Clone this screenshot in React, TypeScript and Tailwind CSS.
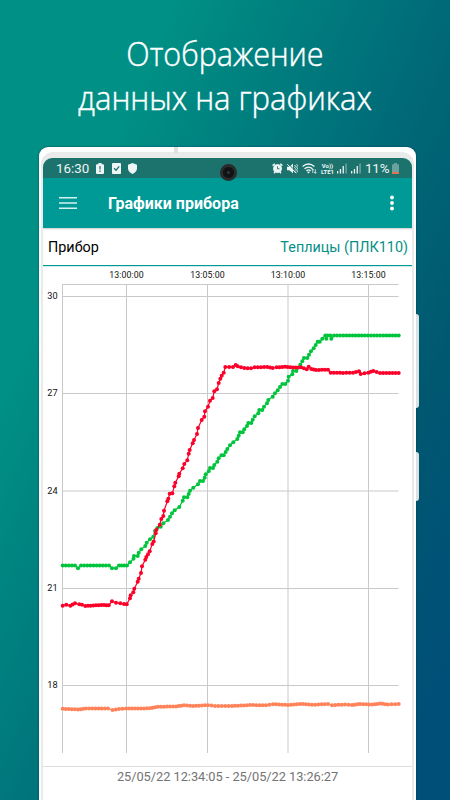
type Point = [number, number];

// chart-space coordinates, origin is the top left corner of the screen area
const GREEN: Point[] = [
  [62.7, 565.5], [75, 565.5], [78, 568.3], [81, 565.5], [109, 565.5], [112, 568.2], [116, 568.2], [119, 565.5],
  [127, 565.5], [130, 562.3], [133.5, 558.7], [134, 556], [137.7, 556], [138.7, 552.7], [141.3, 549.3],
  [145.3, 546], [146.7, 542.7], [150, 539.3], [153.3, 536.7], [155, 531], [157.3, 528], [160.7, 526.7],
  [163.3, 523.3], [168, 520], [170, 516.7], [172, 513.3], [174.7, 510.3], [179.3, 507], [182.7, 500.7],
  [184, 497.3], [187.3, 497.3], [188.7, 494], [190, 490.7], [193.3, 487.7], [198, 484.3], [200, 481],
  [203, 481], [204.7, 477.7], [205.7, 474.3], [208.7, 471.3], [210, 468], [213, 468], [214.3, 465],
  [217.3, 461.7], [218.7, 458.3], [221.5, 455.3], [223.7, 455.3], [225.7, 452], [227.3, 449], [230, 445.3],
  [233.3, 442.3], [237.3, 439], [238.7, 435.7], [240, 432.3], [242.7, 432.3], [244.3, 429.3], [247, 426],
  [248.3, 423], [251.3, 423], [252.7, 419.7], [254.7, 416.3], [258.3, 413.3], [259.3, 410], [262.3, 410],
  [264, 406.7], [267, 403.3], [268.3, 400], [272.7, 396.7], [275, 393.3], [277.7, 390.3], [280, 387],
  [282.3, 384], [285.3, 384], [288, 380.7], [288.7, 376.7], [292.3, 374.3], [293, 371], [296.3, 371],
  [300.3, 364.7], [302.3, 361.3], [304, 358], [307.3, 358], [309, 354.7], [311, 351.3], [313.7, 348.3],
  [315.7, 345], [317.7, 341.7], [319.7, 341.7], [322.3, 338.7], [325.3, 335.5], [326.3, 338.7],
  [327.7, 335.5], [330.3, 335.5], [331.3, 338.7], [334, 335.5], [398.7, 335.5],
];

const RED: Point[] = [
  [62.7, 605.7], [66.3, 604.7], [70.3, 605.7], [75, 603.3], [79.3, 604.3], [82, 604.7], [85.3, 606],
  [90.7, 605.7], [96, 605.3], [104, 605], [108.7, 605.3], [112, 601.3], [116, 602.7], [120.3, 603.3],
  [124, 604], [126.7, 604.3], [130, 598.3], [130.7, 595.3], [133.3, 592.3], [134.3, 588.7], [137.7, 581.7],
  [138.7, 578.7], [141, 573], [142, 566.3], [145.3, 559.7], [146.3, 557], [148, 554.3], [149.7, 551.3],
  [152.3, 544], [153.7, 541.5], [155.7, 533.3], [156.3, 530], [159.7, 524.7], [161.3, 519], [163.3, 516],
  [164, 510.7], [167.3, 501.3], [168.3, 498.7], [169.7, 493.7], [172.3, 493.3], [174.3, 486.3],
  [175.3, 482.7], [178.7, 476.3], [179.3, 473.7], [182.7, 468.3], [184.3, 464], [187.3, 460.3],
  [188.7, 453.7], [189.7, 450], [192.7, 443.3], [194, 440], [197, 434], [198, 428], [201.7, 420],
  [204.3, 416.7], [205, 411.3], [208, 406.7], [210, 400.7], [212.7, 398], [214.3, 391.3], [217, 389.3],
  [218.7, 383], [220.3, 378.7], [221.7, 375.7], [223.7, 372.7], [225.3, 367], [233, 367], [235.7, 364.9],
  [237.7, 366.3], [241, 367.3], [244.3, 368], [251, 368.3], [254.7, 367.3], [267.3, 367], [272.7, 368],
  [276.7, 367.3], [285, 366.8], [293, 367.6], [301, 367.3], [306.7, 369.3], [308.7, 366.8], [311.3, 369],
  [316, 370], [328, 369.7], [330.7, 372.7], [343, 372.9], [353, 372.7], [359, 371.3], [360.7, 374],
  [368.3, 372.7], [373.3, 371], [380, 373], [398.7, 373],
];

const ORANGE: Point[] = [
  [62.7, 708.8], [78, 709.5], [86, 708.4], [108, 708.6], [112.5, 710], [119, 709], [126, 708.6], [150, 708.3],
  [158, 706.8], [176, 706.4], [184, 705.3], [193, 706], [208, 705.2], [215, 706], [232, 706], [250, 705.1],
  [266, 705.2], [273, 704.2], [288, 705], [303, 703.9], [312, 704.8], [328, 704], [332, 705.3], [345, 704.4],
  [352, 705], [360, 704], [372, 704.6], [380, 703.6], [388, 704.4], [398.7, 704],
];

// adds readings on the long flat stretches
function fill(points: Point[]): Point[] {
  const out: Point[] = [points[0]];
  for (let i = 1; i < points.length; i++) {
    const [x0, y0] = points[i - 1];
    const [x1, y1] = points[i];
    const steps = Math.abs(y1 - y0) < 2.5 ? Math.max(1, Math.round((x1 - x0) / 3.1)) : 1;
    for (let s = 1; s <= steps; s++) {
      out.push([x0 + ((x1 - x0) * s) / steps, y0 + ((y1 - y0) * s) / steps]);
    }
  }
  return out;
}

function Series({ points, color }: { points: Point[]; color: string }) {
  const all = fill(points);
  return (
    <g fill={color}>
      <polyline points={all.map((p) => p.join(',')).join(' ')} fill="none" stroke={color} strokeWidth="1.2" />
      {all.map(([x, y], i) => (
        <circle key={i} cx={x} cy={y} r="2" />
      ))}
    </g>
  );
}

const TIMES = [
  { x: 126.5, label: '13:00:00' },
  { x: 207.5, label: '13:05:00' },
  { x: 288, label: '13:10:00' },
  { x: 368.5, label: '13:15:00' },
];

const VALUES = [
  { y: 296.5, label: '30' },
  { y: 393.5, label: '27' },
  { y: 491, label: '24' },
  { y: 588.5, label: '21' },
  { y: 685.5, label: '18' },
];

function Chart() {
  return (
    <svg viewBox="43 267 369 499" className="block h-[499px] w-[369px]" fontFamily="Roboto, sans-serif">
      <g stroke="#c9c9c9" strokeWidth="1">
        <path d="M62.5 284V753M62 284.5H398.5" />
        {TIMES.map((t) => (
          <line key={t.label} x1={t.x} x2={t.x} y1="284" y2="753" />
        ))}
        {VALUES.map((v) => (
          <line key={v.label} x1="62" x2="398.5" y1={v.y} y2={v.y} />
        ))}
      </g>
      <g fontSize="8.8" fill="#111">
        {TIMES.map((t) => (
          <text key={t.label} x={t.x} y="278.3" textAnchor="middle" textLength="34.5">
            {t.label}
          </text>
        ))}
        {VALUES.map((v) => (
          <text key={v.label} x="57.6" y={v.y + 2.8} textAnchor="end" fontSize="9.2">
            {v.label}
          </text>
        ))}
      </g>
      <Series points={GREEN} color="#00c43c" />
      <Series points={ORANGE} color="#ff8259" />
      <Series points={RED} color="#fb0029" />
    </svg>
  );
}

function Signal() {
  return (
    <svg viewBox="0 0 10 11" className="h-[11px] w-[10px]" fill="#eef6f5">
      <path d="M0 8h1.3v2.5H0zM2.8 6h1.3v4.5H2.8zM5.6 3h1.3v7.5H5.6z" />
      <path d="M8.4 0.5h1.3v10H8.4z" opacity=".45" />
    </svg>
  );
}

function StatusBar() {
  return (
    <div className="relative flex h-5 items-center justify-between rounded-t-[9px] bg-[#1c736e] pr-[13px] pl-[13px] text-[#eef6f5]">
      <div className="flex items-center">
        <span className="w-[34px] pt-[2px] text-[13.4px] leading-5 whitespace-nowrap">16:30</span>
        <svg viewBox="0 0 8 11" className="ml-[6px] h-[11px] w-2">
          <path d="M2.4 0h3.2v1.2H7q1 0 1 1V10q0 1-1 1H1q-1 0-1-1V2.2q0-1 1-1h1.4z" fill="#eef6f5" />
          <path d="M3.4 3h1.2v3.6H3.4zM3.4 7.6h1.2v1.3H3.4z" fill="#1c736e" />
        </svg>
        <svg viewBox="0 0 9 11" className="ml-2 h-[11px] w-[9px]">
          <rect width="9" height="11" rx=".8" fill="#eef6f5" />
          <path d="M2 5.2l2 2 3.2-3.8" fill="none" stroke="#1c736e" strokeWidth="1.3" />
        </svg>
        <svg viewBox="0 0 9 11" className="ml-[7px] h-[11px] w-[9px]" fill="#eef6f5">
          <path d="M4.5 0L9 1.7v3.6C9 8 7 10 4.5 11 2 10 0 8 0 5.3V1.7z" />
        </svg>
      </div>

      <div className="absolute top-[6px] left-[177px] flex h-[17px] w-[17px] items-center justify-center rounded-full bg-[#292b2d]">
        <div className="flex h-[11px] w-[11px] items-center justify-center rounded-full bg-[#111214]">
          <div className="h-[3px] w-[3px] rounded-full bg-[#33383b]" />
        </div>
      </div>

      <div className="flex items-center">
        <svg viewBox="0 0 11 11" className="h-[11px] w-[11px]" fill="none" stroke="#eef6f5">
          <path d="M.6 2.6L2.8.7M8.2.7l2.2 1.9M2 10.3l1.2-1.4M9 10.3L7.8 8.9" strokeWidth="1.4" />
          <circle cx="5.5" cy="5.6" r="4" fill="#eef6f5" />
          <path d="M5.5 3.4v2.4h2" stroke="#1c736e" strokeWidth=".9" />
        </svg>
        <svg viewBox="0 0 11 11" className="ml-1 h-[11px] w-[11px]" fill="#eef6f5">
          <path d="M0 3.8h2.3L6 .8v9.4L2.3 7.2H0z" />
          <path d="M7.6 2l1 1.2-1 1.2 1 1.2-1 1.2 1 1.2-1 1.2M9.6 1.2l1 1.4-1 1.4 1 1.4-1 1.4 1 1.4-1 1.4" fill="none" stroke="#eef6f5" strokeWidth=".9" />
          <path d="M1.1.6l9 9" stroke="#1c736e" strokeWidth="1" />
          <path d="M.3 1.2l9 9" stroke="#eef6f5" strokeWidth="1" />
        </svg>
        <svg viewBox="0 0 15 11" className="ml-1 h-[11px] w-[15px]" fill="none" stroke="#eef6f5" strokeWidth="1.3">
          <path d="M.6 3.6Q6.5-1.6 12.4 3.6M2.5 5.8q4-3.4 8 0M4.4 7.8q2.1-1.7 4.2 0" />
          <path d="M5.2 8.8h2.6L6.5 10.4z" fill="#eef6f5" strokeWidth=".3" />
          <path d="M10.8 6v4M9.7 7.2L10.8 6l1 1.2M13.3 6.3v4M12.2 9.2l1.1 1.2 1.1-1.2" strokeWidth=".8" />
        </svg>
        <div className="ml-[3px] flex w-[15px] flex-col items-center pt-px text-[6px] leading-[5.5px] font-bold">
          <span>Vo))</span>
          <span>LTE1</span>
        </div>
        <div className="ml-[2px] flex gap-1">
          <Signal />
          <Signal />
        </div>
        <span className="ml-[4px] w-[26px] pt-[2px] text-[13.4px] leading-5 tracking-[-0.2px] whitespace-nowrap">11%</span>
        <svg viewBox="0 0 7 11" className="ml-[1px] h-[11px] w-[7px]">
          <path d="M2 0h3v1.2h1.2q.8 0 .8.8v8.2q0 .8-.8.8H.8q-.8 0-.8-.8V2q0-.8.8-.8H2z" fill="#6ba19e" />
          <path d="M0 9h7v1.2q0 .8-.8.8H.8q-.8 0-.8-.8z" fill="#df7650" />
        </svg>
      </div>
    </div>
  );
}

function AppBar() {
  return (
    <div className="flex h-[50px] items-center bg-[#009a96] pr-[18px] pl-4 text-white">
      <svg viewBox="0 0 18 12" className="h-3 w-[18px]" fill="#d9f1f0">
        <path d="M0 0h18v1.5H0zM0 5.2h18v1.5H0zM0 10.5h18V12H0z" />
      </svg>
      <h1 className="ml-[31px] flex-1 pt-[2px] text-[16px] leading-5 font-bold">Графики прибора</h1>
      <svg viewBox="0 0 4 16" className="h-4 w-1" fill="#fff">
        <circle cx="2" cy="2.5" r="1.9" />
        <circle cx="2" cy="8" r="1.9" />
        <circle cx="2" cy="13.5" r="1.9" />
      </svg>
    </div>
  );
}

export default function App() {
  return (
    <div className="flex h-[800px] w-[450px] flex-col overflow-hidden bg-[linear-gradient(113.4deg,#009085_0%,#009085_22%,#006877_58%,#005870_75%,#004f78_92%,#004f78_100%)] font-[Roboto,sans-serif]">
      <header className="h-[147px] pt-[31px] text-center text-[33.5px] leading-[44px] font-light text-white [-webkit-text-stroke:0.45px_white] font-['Open_Sans',sans-serif]">
        <div className="origin-center scale-x-[0.91]">Отображение</div>
        <div className="origin-center scale-x-[0.925] whitespace-nowrap">данных на графиках</div>
      </header>

      <main className="relative ml-[39px] h-[653px] w-[377px] rounded-t-[9px] bg-white px-1 pt-[11px] shadow-[0_0_2px_#003c55]">
        <div className="absolute top-[5px] right-[2px] left-[2px] h-[648px] rounded-t-[12px] bg-[#e9ebeb]" />
        <div className="absolute top-0 left-[135px] h-[6px] w-1 bg-[#dfe1e1]" />
        <div className="absolute top-[167px] -right-[3px] h-[94px] w-[3px] rounded-r-sm bg-[#dce1e2]" />
        <div className="absolute top-[305px] -right-[3px] h-[49px] w-[3px] rounded-r-sm bg-[#dce1e2]" />

        <div className="relative flex h-[642px] flex-col rounded-t-[9px] bg-white">
          <StatusBar />
          <AppBar />
          <div className="flex h-[38px] items-center justify-between border-b border-[#009a96] pt-[2px] pr-1 pl-[5px] text-[14.4px] shadow-[inset_0_2px_2px_-1px_#ccc]">
            <span className="text-black">Прибор</span>
            <span className="text-[#078f87]">Теплицы (ПЛК110)</span>
          </div>
          <div className="h-px bg-[#d0eae9]" />
          <Chart />
          <div className="border-t border-[#dedede] text-center text-[12.8px] leading-[19px] tracking-[-0.03px] text-[#737373]">
            25/05/22 12:34:05 - 25/05/22 13:26:27
          </div>
        </div>
      </main>
    </div>
  );
}
